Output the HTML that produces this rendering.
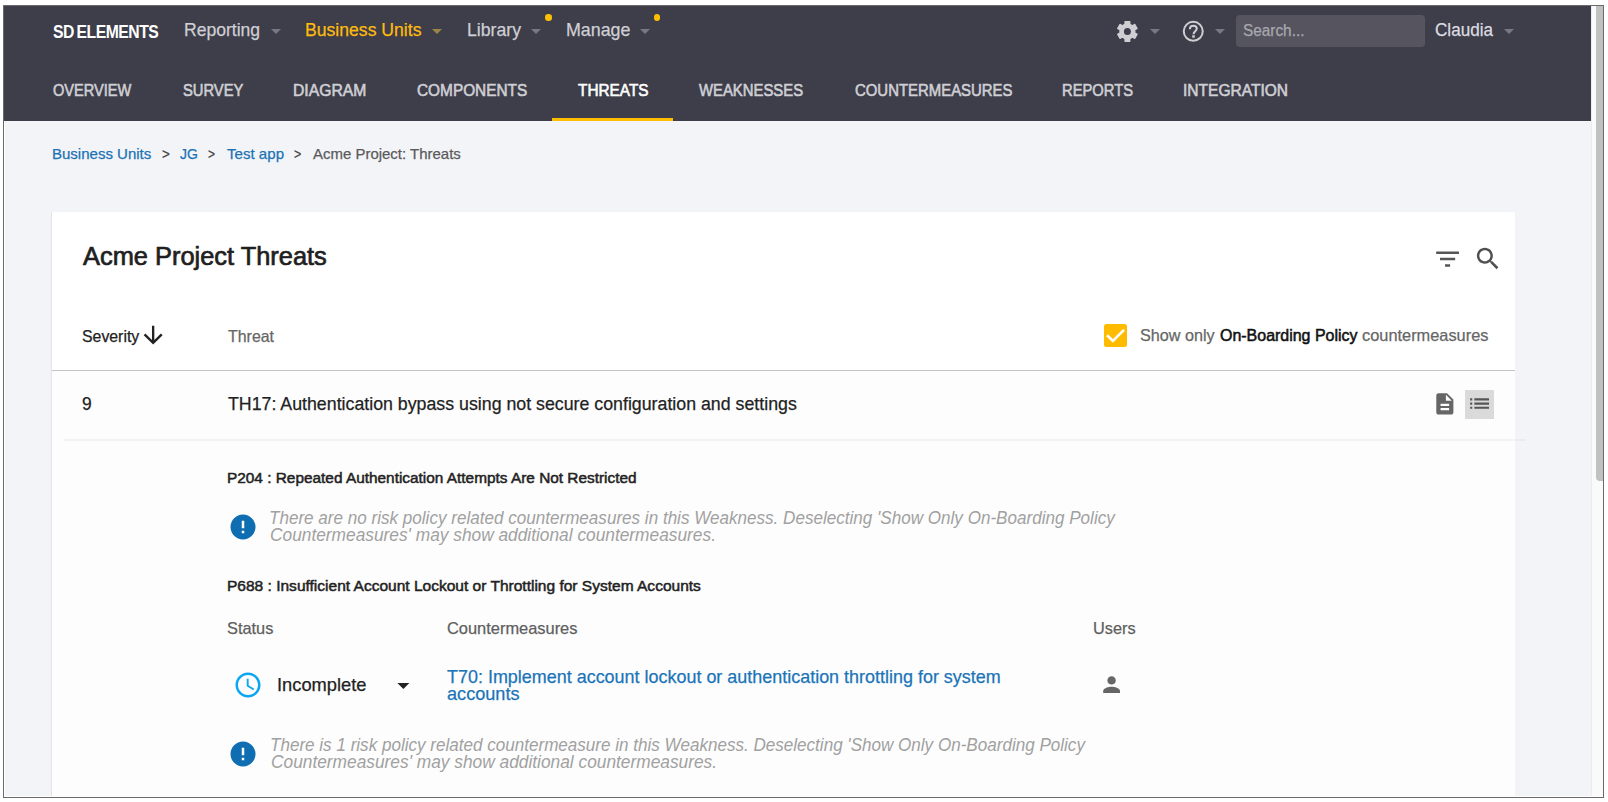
<!DOCTYPE html>
<html><head><meta charset="utf-8"><title>Acme Project Threats</title>
<style>
*{box-sizing:border-box;margin:0;padding:0}
html,body{width:1608px;height:802px;overflow:hidden;background:#ffffff}
body{position:relative;font-family:"Liberation Sans",sans-serif}
.t{position:absolute;white-space:nowrap;line-height:1;transform-origin:0 0}
.abs{position:absolute}
svg{position:absolute;overflow:visible}
.car{position:absolute;width:0;height:0;border-left:5.5px solid transparent;border-right:5.5px solid transparent;border-top:5.6px solid #787782}
</style></head><body>
<div class="abs" style="left:3px;top:5px;width:1601px;height:793px;border:1px solid #6a6a6a;background:#ffffff"></div>
<div class="abs" style="left:5px;top:121px;width:1586px;height:675px;background:#f3f4f8"></div>
<div class="abs" style="left:4px;top:6px;width:1587px;height:115px;background:#3e3d4a"></div>
<div class="abs" style="left:1591px;top:6px;width:12px;height:791px;background:#fafafa;border-left:1px solid #ececec"></div>
<div class="abs" style="left:1596.3px;top:6px;width:6.7px;height:475px;background:#c1c1c1;border-radius:0 0 0 4px"></div>
<div class="abs" style="left:552px;top:118px;width:121px;height:3px;background:#ffbf00"></div>
<div class="car" style="left:270.5px;top:28.9px;border-top-color:#787782"></div>
<div class="car" style="left:432px;top:28.9px;border-top-color:#9a8545"></div>
<div class="car" style="left:530.6px;top:28.9px;border-top-color:#787782"></div>
<div class="car" style="left:639.7px;top:28.9px;border-top-color:#787782"></div>
<div class="car" style="left:1149.5px;top:28.9px;border-top-color:#787782"></div>
<div class="car" style="left:1215.1px;top:28.9px;border-top-color:#787782"></div>
<div class="car" style="left:1504.4px;top:28.9px;border-top-color:#787782"></div>
<div class="abs" style="left:545.0px;top:14.399999999999999px;width:6.6px;height:6.6px;border-radius:50%;background:#ffc000"></div>
<div class="abs" style="left:653.8000000000001px;top:14.399999999999999px;width:6.6px;height:6.6px;border-radius:50%;background:#ffc000"></div>
<svg style="left:1116px;top:20px" width="23" height="23"><g transform="translate(11.4,11.4)"><g fill="#cfcfd3"><rect x="-3" y="-10.5" width="6" height="6" rx="0.6" transform="rotate(0)"/><rect x="-3" y="-10.5" width="6" height="6" rx="0.6" transform="rotate(60)"/><rect x="-3" y="-10.5" width="6" height="6" rx="0.6" transform="rotate(120)"/><rect x="-3" y="-10.5" width="6" height="6" rx="0.6" transform="rotate(180)"/><rect x="-3" y="-10.5" width="6" height="6" rx="0.6" transform="rotate(240)"/><rect x="-3" y="-10.5" width="6" height="6" rx="0.6" transform="rotate(300)"/><circle r="8.1"/></g><circle r="3.5" fill="#3e3d4a"/></g></svg>
<svg style="left:1181px;top:19px" width="25" height="25"><g transform="translate(12.25,12.35)"><circle r="9.5" fill="none" stroke="#cfcfd3" stroke-width="2"/><path d="M-3.4,-2.2 C-3.4,-4.5 -1.8,-5.6 0.1,-5.6 C2.1,-5.6 3.5,-4.3 3.5,-2.6 C3.5,-0.2 0.3,0.1 0.3,2.9" fill="none" stroke="#cfcfd3" stroke-width="2"/><rect x="-1.0" y="3.9" width="2.5" height="2.5" fill="#cfcfd3"/></g></svg>
<div class="abs" style="left:1236px;top:14.6px;width:189px;height:32.3px;border-radius:4px;background:#55545f"></div>
<div class="abs" style="left:52px;top:212px;width:1463px;height:584px;background:#ffffff;box-shadow:-1px 0 1px rgba(0,0,0,0.06)"></div>
<div class="abs" style="left:52px;top:371px;width:1463px;height:425px;background:#fdfdfd"></div>
<div class="abs" style="left:52px;top:370px;width:1463px;height:1px;background:#c3c3c3"></div>
<div class="abs" style="left:63px;top:439px;width:1452px;height:2px;background:#f3f3f3"></div>
<div class="abs" style="left:1515px;top:439px;width:11px;height:2px;background:#ebecf0"></div>
<svg style="left:1430px;top:242px" width="34" height="34"><g transform="translate(2.4,1.9) scale(1.265)"><path fill="#555555" d="M10 18h4v-2h-4v2zM3 6v2h18V6H3zm3 7h12v-2H6v2z"/></g></svg>
<svg style="left:1471px;top:242px" width="34" height="34"><path transform="translate(2.2,2.0) scale(1.23)" fill="#4f4f4f" d="M15.5 14h-.79l-.28-.27C15.41 12.59 16 11.11 16 9.5 16 5.91 13.09 3 9.5 3S3 5.91 3 9.5 5.91 16 9.5 16c1.61 0 3.09-.59 4.23-1.57l.27.28v.79l5 4.99L20.49 19l-4.99-5zm-6 0C7.01 14 5 11.99 5 9.5S7.01 5 9.5 5 14 7.01 14 9.5 11.99 14 9.5 14z"/></svg>
<svg style="left:139.4px;top:320.5px" width="28.3" height="28.3" viewBox="0 0 24 24"><path fill="#222222" d="M20 12l-1.41-1.41L13 16.17V4h-2v12.17l-5.58-5.59L4 12l8 8 8-8z"/></svg>
<div class="abs" style="left:1104px;top:324px;width:23px;height:23px;border-radius:2.5px;background:#ffbb00"></div>
<svg style="left:1104px;top:324px" width="23" height="23"><path d="M3.1,11.3 L8.9,16.9 L20.0,5.9" fill="none" stroke="#ffffff" stroke-width="2.7"/></svg>
<svg style="left:1431.9px;top:391.1px" width="25.68" height="25.68" viewBox="0 0 24 24"><path fill="#666666" d="M14 2H6c-1.1 0-1.99.9-1.99 2L4 20c0 1.1.89 2 1.99 2H18c1.1 0 2-.9 2-2V8l-6-6zm2 16H8v-2h8v2zm0-4H8v-2h8v2zm-3-5V3.5L18.5 9H13z"/></svg>
<div class="abs" style="left:1465px;top:390px;width:29px;height:29px;background:#dadada"></div>
<svg style="left:1466.85px;top:391.35px" width="25.2" height="25.2" viewBox="0 0 24 24"><path fill="#555555" d="M3 13h2v-2H3v2zm0 4h2v-2H3v2zm0-8h2V7H3v2zm4 4h14v-2H7v2zm0 4h14v-2H7v2zM7 7v2h14V7H7z"/></svg>
<svg style="left:227.8px;top:512.0px" width="30" height="30" viewBox="0 0 24 24"><path fill="#0f6db2" d="M12 2C6.48 2 2 6.48 2 12s4.48 10 10 10 10-4.48 10-10S17.52 2 12 2zm1 15h-2v-2h2v2zm0-4h-2V7h2v6z"/></svg>
<svg style="left:227.8px;top:738.8000000000001px" width="30" height="30" viewBox="0 0 24 24"><path fill="#0f6db2" d="M12 2C6.48 2 2 6.48 2 12s4.48 10 10 10 10-4.48 10-10S17.52 2 12 2zm1 15h-2v-2h2v2zm0-4h-2V7h2v6z"/></svg>
<svg style="left:233.1px;top:670.1px" width="30" height="30" viewBox="0 0 24 24"><path fill="#0aa6f0" d="M11.99 2C6.47 2 2 6.48 2 12s4.47 10 9.99 10C17.52 22 22 17.52 22 12S17.52 2 11.99 2zM12 20c-4.42 0-8-3.58-8-8s3.58-8 8-8 8 3.58 8 8-3.58 8-8 8zm.5-13H11v6l5.25 3.15.75-1.23-4.5-2.67z"/></svg>
<svg style="left:389.2px;top:670.5px" width="28.8" height="28.8" viewBox="0 0 24 24"><path fill="#222222" d="M7 10l5 5 5-5z"/></svg>
<svg style="left:1099.2px;top:671.7px" width="25.2" height="25.2" viewBox="0 0 24 24"><path fill="#666666" d="M12 12c2.21 0 4-1.79 4-4s-1.79-4-4-4-4 1.79-4 4 1.79 4 4 4zm0 2c-2.67 0-8 1.34-8 4v2h16v-2c0-2.66-5.33-4-8-4z"/></svg>
<div class="t" style="left:52.75px;top:23.05px;font-size:18.605px;color:#ffffff;font-weight:700;font-style:normal;transform:scaleX(0.8463);letter-spacing:-0.6px;word-spacing:-1.3px">SD ELEMENTS</div>
<div class="t" style="left:184.46px;top:21.15px;font-size:18.605px;color:#cfcfd4;font-weight:400;font-style:normal;transform:scaleX(0.9443);-webkit-text-stroke:0.25px currentColor">Reporting</div>
<div class="t" style="left:305.46px;top:21.23px;font-size:18.750px;color:#fdbb0e;font-weight:400;font-style:normal;transform:scaleX(0.9390);-webkit-text-stroke:0.25px currentColor">Business Units</div>
<div class="t" style="left:467.15px;top:21.25px;font-size:18.605px;color:#cfcfd4;font-weight:400;font-style:normal;transform:scaleX(0.9500);-webkit-text-stroke:0.25px currentColor">Library</div>
<div class="t" style="left:565.64px;top:21.25px;font-size:18.605px;color:#cfcfd4;font-weight:400;font-style:normal;transform:scaleX(0.9591);-webkit-text-stroke:0.25px currentColor">Manage</div>
<div class="t" style="left:1243.24px;top:23.47px;font-size:15.988px;color:#a8a8ae;font-weight:400;font-style:normal;transform:scaleX(0.9613);-webkit-text-stroke:0.25px currentColor">Search...</div>
<div class="t" style="left:1435.09px;top:21.13px;font-size:18.750px;color:#dcdce0;font-weight:400;font-style:normal;transform:scaleX(0.9111);-webkit-text-stroke:0.25px currentColor">Claudia</div>
<div class="t" style="left:52.50px;top:82.40px;font-size:16.424px;color:#cfcfd4;font-weight:400;font-style:normal;transform:scaleX(0.8888);-webkit-text-stroke:0.6px currentColor">OVERVIEW</div>
<div class="t" style="left:182.60px;top:82.40px;font-size:16.424px;color:#cfcfd4;font-weight:400;font-style:normal;transform:scaleX(0.8985);-webkit-text-stroke:0.6px currentColor">SURVEY</div>
<div class="t" style="left:293.04px;top:82.40px;font-size:16.424px;color:#cfcfd4;font-weight:400;font-style:normal;transform:scaleX(0.9573);-webkit-text-stroke:0.6px currentColor">DIAGRAM</div>
<div class="t" style="left:416.90px;top:82.40px;font-size:16.424px;color:#cfcfd4;font-weight:400;font-style:normal;transform:scaleX(0.9376);-webkit-text-stroke:0.6px currentColor">COMPONENTS</div>
<div class="t" style="left:577.70px;top:82.40px;font-size:16.424px;color:#ffffff;font-weight:400;font-style:normal;transform:scaleX(0.9360);-webkit-text-stroke:0.6px currentColor">THREATS</div>
<div class="t" style="left:698.90px;top:82.40px;font-size:16.424px;color:#cfcfd4;font-weight:400;font-style:normal;transform:scaleX(0.9061);-webkit-text-stroke:0.6px currentColor">WEAKNESSES</div>
<div class="t" style="left:854.50px;top:82.40px;font-size:16.424px;color:#cfcfd4;font-weight:400;font-style:normal;transform:scaleX(0.9092);-webkit-text-stroke:0.6px currentColor">COUNTERMEASURES</div>
<div class="t" style="left:1061.90px;top:82.40px;font-size:16.424px;color:#cfcfd4;font-weight:400;font-style:normal;transform:scaleX(0.8987);-webkit-text-stroke:0.6px currentColor">REPORTS</div>
<div class="t" style="left:1183.05px;top:82.40px;font-size:16.424px;color:#cfcfd4;font-weight:400;font-style:normal;transform:scaleX(0.9468);-webkit-text-stroke:0.6px currentColor">INTEGRATION</div>
<div class="t" style="left:51.53px;top:145.54px;font-size:15.552px;color:#1a72b3;font-weight:400;font-style:normal;transform:scaleX(0.9657);-webkit-text-stroke:0.25px currentColor">Business Units</div>
<div class="t" style="left:161.54px;top:145.54px;font-size:15.552px;color:#444444;font-weight:400;font-style:normal;transform:scaleX(0.8625);-webkit-text-stroke:0.25px currentColor">&gt;</div>
<div class="t" style="left:180.20px;top:145.54px;font-size:15.552px;color:#1a72b3;font-weight:400;font-style:normal;transform:scaleX(0.9000);-webkit-text-stroke:0.25px currentColor">JG</div>
<div class="t" style="left:208.02px;top:145.54px;font-size:15.552px;color:#444444;font-weight:400;font-style:normal;transform:scaleX(0.7750);-webkit-text-stroke:0.25px currentColor">&gt;</div>
<div class="t" style="left:227.40px;top:145.54px;font-size:15.552px;color:#1a72b3;font-weight:400;font-style:normal;transform:scaleX(0.9707);-webkit-text-stroke:0.25px currentColor">Test app</div>
<div class="t" style="left:293.80px;top:145.54px;font-size:15.552px;color:#444444;font-weight:400;font-style:normal;transform:scaleX(0.8000);-webkit-text-stroke:0.25px currentColor">&gt;</div>
<div class="t" style="left:313.20px;top:145.54px;font-size:15.552px;color:#5a5a5a;font-weight:400;font-style:normal;transform:scaleX(0.9627);-webkit-text-stroke:0.25px currentColor">Acme Project: Threats</div>
<div class="t" style="left:82.80px;top:243.79px;font-size:25.291px;color:#1f1f1f;font-weight:400;font-style:normal;transform:scaleX(1.0050);-webkit-text-stroke:0.7px currentColor">Acme Project Threats</div>
<div class="t" style="left:81.83px;top:328.12px;font-size:16.279px;color:#222222;font-weight:400;font-style:normal;transform:scaleX(0.9741);-webkit-text-stroke:0.25px currentColor">Severity</div>
<div class="t" style="left:227.80px;top:328.12px;font-size:16.279px;color:#666666;font-weight:400;font-style:normal;transform:scaleX(0.9787);-webkit-text-stroke:0.25px currentColor">Threat</div>
<div class="t" style="left:1140.33px;top:327.95px;font-size:16.715px;color:#666666;font-weight:400;font-style:normal;transform:scaleX(0.9684);-webkit-text-stroke:0.25px currentColor">Show only</div>
<div class="t" style="left:1220.00px;top:327.95px;font-size:16.715px;color:#111111;font-weight:400;font-style:normal;transform:scaleX(0.9556);-webkit-text-stroke:0.55px currentColor">On-Boarding Policy</div>
<div class="t" style="left:1362.40px;top:327.95px;font-size:16.715px;color:#666666;font-weight:400;font-style:normal;transform:scaleX(0.9798);-webkit-text-stroke:0.25px currentColor">countermeasures</div>
<div class="t" style="left:82.08px;top:395.01px;font-size:18.895px;color:#222222;font-weight:400;font-style:normal;transform:scaleX(0.9222);-webkit-text-stroke:0.25px currentColor">9</div>
<div class="t" style="left:227.80px;top:395.01px;font-size:18.895px;color:#222222;font-weight:400;font-style:normal;transform:scaleX(0.9411);-webkit-text-stroke:0.25px currentColor">TH17: Authentication bypass using not secure configuration and settings</div>
<div class="t" style="left:226.79px;top:470.18px;font-size:15.262px;color:#222222;font-weight:400;font-style:normal;transform:scaleX(1.0087);-webkit-text-stroke:0.5px currentColor">P204 : Repeated Authentication Attempts Are Not Restricted</div>
<div class="t" style="left:268.92px;top:509.02px;font-size:18.169px;color:#a1a1a1;font-weight:400;font-style:italic;transform:scaleX(0.9405);">There are no risk policy related countermeasures in this Weakness. Deselecting 'Show Only On-Boarding Policy</div>
<div class="t" style="left:269.85px;top:525.52px;font-size:18.169px;color:#a1a1a1;font-weight:400;font-style:italic;transform:scaleX(0.9535);">Countermeasures' may show additional countermeasures.</div>
<div class="t" style="left:226.78px;top:578.08px;font-size:15.262px;color:#222222;font-weight:400;font-style:normal;transform:scaleX(1.0176);-webkit-text-stroke:0.5px currentColor">P688 : Insufficient Account Lockout or Throttling for System Accounts</div>
<div class="t" style="left:226.81px;top:621.17px;font-size:16.570px;color:#5f5f5f;font-weight:400;font-style:normal;transform:scaleX(0.9870);-webkit-text-stroke:0.25px currentColor">Status</div>
<div class="t" style="left:446.51px;top:621.17px;font-size:16.570px;color:#5f5f5f;font-weight:400;font-style:normal;transform:scaleX(0.9908);-webkit-text-stroke:0.25px currentColor">Countermeasures</div>
<div class="t" style="left:1093.41px;top:621.17px;font-size:16.570px;color:#5f5f5f;font-weight:400;font-style:normal;transform:scaleX(0.9857);-webkit-text-stroke:0.25px currentColor">Users</div>
<div class="t" style="left:277.00px;top:675.70px;font-size:18.314px;color:#222222;font-weight:400;font-style:normal;transform:scaleX(1.0000);-webkit-text-stroke:0.25px currentColor">Incomplete</div>
<div class="t" style="left:447.00px;top:667.85px;font-size:18.605px;color:#1b74b8;font-weight:400;font-style:normal;transform:scaleX(0.9653);-webkit-text-stroke:0.25px currentColor">T70: Implement account lockout or authentication throttling for system</div>
<div class="t" style="left:446.53px;top:684.85px;font-size:18.605px;color:#1b74b8;font-weight:400;font-style:normal;transform:scaleX(0.9740);-webkit-text-stroke:0.25px currentColor">accounts</div>
<div class="t" style="left:269.72px;top:735.52px;font-size:18.169px;color:#a1a1a1;font-weight:400;font-style:italic;transform:scaleX(0.9400);">There is 1 risk policy related countermeasure in this Weakness. Deselecting 'Show Only On-Boarding Policy</div>
<div class="t" style="left:270.65px;top:752.72px;font-size:18.169px;color:#a1a1a1;font-weight:400;font-style:italic;transform:scaleX(0.9538);">Countermeasures' may show additional countermeasures.</div>
<div class="abs" style="left:3px;top:5px;width:1601px;height:793px;border:1px solid #6a6a6a"></div>
<div class="abs" style="left:4px;top:796px;width:1599px;height:1px;background:#ffffff"></div>
<div class="abs" style="left:4px;top:121px;width:1px;height:675px;background:#ffffff"></div>
</body></html>
